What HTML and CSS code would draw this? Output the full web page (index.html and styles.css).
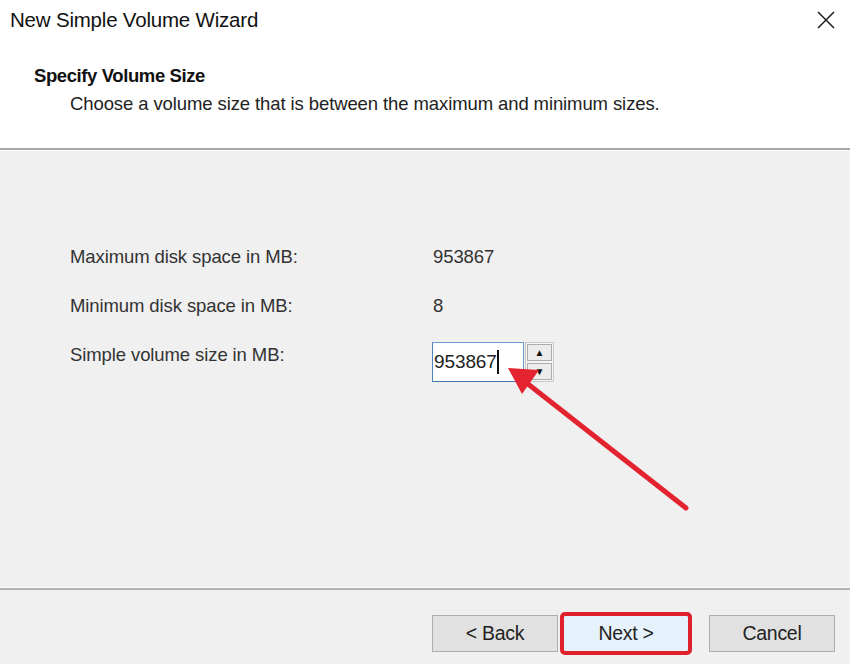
FILE: index.html
```html
<!DOCTYPE html>
<html lang="en">
<head>
    <meta charset="UTF-8" />
    <title>New Simple Volume Wizard</title>
    <link rel="stylesheet" href="styles.css">
</head>
<body>
    <div class="wizard">
        <div class="titlebar">
            <span class="title">New Simple Volume Wizard</span>
            <svg class="close" width="20" height="20" viewBox="0 0 20 20">
                <path d="M2 2 L18 18 M18 2 L2 18" stroke="#222" stroke-width="1.6" fill="none" />
            </svg>
        </div>
        <div class="header">
            <h1>Specify Volume Size</h1>
            <p>Choose a volume size that is between the maximum and minimum sizes.</p>
        </div>

        <div class="content">
            <div class="fields">
                <div class="label">Maximum disk space in MB:</div>
                <div class="value">953867</div>
                <div class="label">Minimum disk space in MB:</div>
                <div class="value">8</div>
                <div class="label">Simple volume size in MB:</div>
                <div class="spin">
                    <div class="spin-input">953867<span class="caret"></span></div>
                    <div class="spin-buttons">
                        <div class="spin-btn">&#9650;</div>
                        <div class="spin-btn">&#9660;</div>
                    </div>
                </div>
            </div>
        </div>

        <div class="footer">
            <button class="btn">&lt; Back</button>
            <button class="btn btn-next">Next &gt;</button>
            <button class="btn btn-cancel">Cancel</button>
        </div>

        <svg class="arrow" width="850" height="664" viewBox="0 0 850 664">
            <line x1="686" y1="508" x2="528" y2="384" stroke="#e3232f" stroke-width="5" stroke-linecap="round" />
            <polygon points="508,368 539,370 522,394" fill="#e3232f" />
        </svg>
    </div>
</body>
</html>
```

FILE: styles.css
```css
body {
    margin: 0;
    font-family: "Liberation Sans", Arial, sans-serif;
    color: #222;
}
.wizard {
    position: relative;
    width: 850px;
    height: 664px;
    background: #f0f0f0;
    overflow: hidden;
}
.titlebar {
    height: 40px;
    background: white;
    display: flex;
    justify-content: space-between;
    align-items: center;
    padding: 0 14px 0 10px;
}
.title {
    font-size: 20.5px;
    color: #111;
    letter-spacing: -0.2px;
}
.close {
    margin-top: -1px;
}
.header {
    background: white;
    border-bottom: 2px solid #a8a8a8;
    box-sizing: border-box;
    height: 110px;
    padding-top: 25px;
}
.header h1 {
    margin: 0 0 0 34px;
    font-size: 18.5px;
    font-weight: bold;
    color: #111;
    letter-spacing: -0.4px;
}
.header p {
    margin: 6px 0 0 70px;
    font-size: 18.5px;
    color: #222;
    letter-spacing: -0.1px;
}
.content {
    height: 438px;
    border-top: 1px solid #fbfbfb;
    border-bottom: 1px solid #fbfbfb;
    box-sizing: border-box;
    padding: 81px 0 0 70px;
}
.fields {
    display: grid;
    grid-template-columns: 363px auto;
    grid-auto-rows: 49px;
    align-items: center;
    font-size: 18.5px;
    color: #333;
    letter-spacing: -0.1px;
}
.spin {
    display: flex;
    align-items: center;
    margin: 14px 0 0 -1px;
}
.spin-input {
    width: 92px;
    height: 40px;
    box-sizing: border-box;
    border: 1px solid #6b9ccf;
    border-left-color: #4d86c2;
    border-bottom-color: #3e78b8;
    background: white;
    padding: 0 0 0 1px;
    display: flex;
    align-items: center;
    font-size: 19px;
    color: #222;
}
.caret {
    display: inline-block;
    width: 2px;
    height: 24px;
    background: #111;
    margin-left: 0;
}
.spin-buttons {
    display: flex;
    flex-direction: column;
    gap: 2px;
    margin-left: 1px;
    border: 1px solid #c8c8c8;
    padding: 1px;
    background: #f6f6f6;
}
.spin-btn {
    width: 25px;
    height: 17px;
    box-sizing: border-box;
    border: 1px solid #adadad;
    background: #ececec;
    font-size: 10px;
    line-height: 15px;
    text-align: center;
    color: #111;
}
.footer {
    height: 76px;
    border-top: 2px solid #b4b4b4;
    box-sizing: border-box;
    display: flex;
    align-items: flex-start;
    padding: 25px 0 0 432px;
}
.btn {
    width: 126px;
    height: 37px;
    font-family: "Liberation Sans", Arial, sans-serif;
    font-size: 19.5px;
    color: #222;
    background: #e1e1e1;
    border: 1px solid #adadad;
    letter-spacing: -0.3px;
    margin: 0;
}
.btn-next {
    margin-left: 5px;
    background: #e5f1fb;
    border: 1px solid #7eb4ea;
    outline: 4px solid #e0202c;
    outline-offset: -1px;
    border-radius: 2px;
}
.btn-cancel {
    margin-left: 20px;
}
.arrow {
    position: absolute;
    left: 0;
    top: 0;
    pointer-events: none;
}
```
